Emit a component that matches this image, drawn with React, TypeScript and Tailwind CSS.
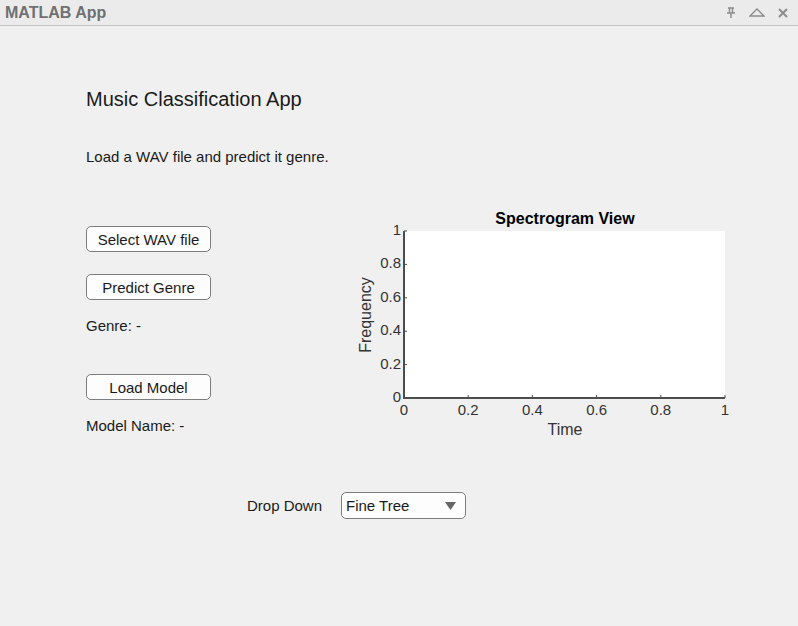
import React from 'react';

const yTicks = [0, 0.2, 0.4, 0.6, 0.8, 1];
const xTicks = [0, 0.2, 0.4, 0.6, 0.8, 1];

// plot box inside the svg
const X0 = 49;
const X1 = 370;
const Y0 = 26;
const Y1 = 193;

const fmt = (v: number) => (v === 0 || v === 1 ? String(v) : v.toFixed(1));

const SpectrogramAxes: React.FC = () => {
  const px = (v: number) => X0 + v * (X1 - X0);
  const py = (v: number) => Y1 - v * (Y1 - Y0);

  return (
    <svg width={390} height={240} className="block" style={{ fontFamily: '"Liberation Sans", Arial, sans-serif' }}>
      <text x={210} y={19} textAnchor="middle" fontSize={16} fontWeight={700} fill="#000">
        Spectrogram View
      </text>
      <rect x={X0} y={Y0} width={X1 - X0} height={Y1 - Y0} fill="#ffffff" />

      {yTicks.map((v) => (
        <g key={'y' + v}>
          <line x1={X0} x2={X0 + 3} y1={py(v)} y2={py(v)} stroke="#4d4d4d" strokeWidth={1} />
          <text x={X0 - 3} y={py(v)} textAnchor="end" dominantBaseline="middle" fontSize={15} fill="#333">
            {fmt(v)}
          </text>
        </g>
      ))}
      {xTicks.map((v) => (
        <g key={'x' + v}>
          <line x1={px(v)} x2={px(v)} y1={Y1} y2={Y1 - 3} stroke="#4d4d4d" strokeWidth={1} />
          <text x={px(v)} y={206} textAnchor="middle" dominantBaseline="middle" fontSize={15} fill="#333">
            {fmt(v)}
          </text>
        </g>
      ))}

      <line x1={X0} x2={X0} y1={Y0} y2={Y1 + 1} stroke="#4d4d4d" strokeWidth={2} />
      <line x1={X0 - 1} x2={X1} y1={Y1} y2={Y1} stroke="#4d4d4d" strokeWidth={2} />

      <text x={210} y={226} textAnchor="middle" dominantBaseline="middle" fontSize={16} fill="#333">
        Time
      </text>
      <text
        x={12}
        y={110}
        textAnchor="middle"
        dominantBaseline="middle"
        fontSize={16}
        fill="#333"
        transform="rotate(-90 12 110)"
      >
        Frequency
      </text>
    </svg>
  );
};

const AppButton: React.FC<{ label: string; className?: string }> = ({ label, className = '' }) => (
  <button
    className={`w-[125px] h-[26px] rounded-[5px] border border-[#7d7d7d] bg-[#fdfdfd] text-[15px] leading-none text-[#1a1a1a] flex items-center justify-center ${className}`}
  >
    {label}
  </button>
);

export default function App() {
  return (
    <div
      className="w-[798px] h-[626px] bg-[#f0f0f0] flex flex-col overflow-hidden text-[#1a1a1a]"
      style={{ fontFamily: '"Liberation Sans", Arial, sans-serif' }}
    >
      {/* window title bar */}
      <div className="h-[26px] shrink-0 bg-[#ebebeb] border-b border-[#c2c2c2] flex items-center justify-between pl-[5px] pr-[10px]">
        <span className="text-[16px] font-bold text-[#707070] leading-none">MATLAB App</span>
        <div className="flex items-center gap-[13px] text-[#8c8c8c]">
          <svg width={10} height={11} viewBox="0 0 10 11" fill="none" stroke="currentColor" strokeWidth={1.4}>
            <path d="M2 1h6M3.5 1v5M6.5 1v5M1 6h8M5 6v5" />
          </svg>
          <svg width={16} height={9} viewBox="0 0 16 9" fill="none" stroke="currentColor" strokeWidth={1.3}>
            <path d="M1 8h14L8 1z" />
          </svg>
          <svg width={10} height={10} viewBox="0 0 10 10" fill="none" stroke="currentColor" strokeWidth={2}>
            <path d="M1 1l8 8M9 1l-8 8" />
          </svg>
        </div>
      </div>

      <div className="pl-[86px]">
        <h1 className="mt-[61px] text-[20px] leading-[24px] font-normal">Music Classification App</h1>
        <p className="mt-[37px] text-[15px] leading-[18px]">Load a WAV file and predict it genre.</p>

        <div className="mt-[39px] flex items-start">
          <div className="w-[269px] pt-[21px] flex flex-col items-start">
            <AppButton label="Select WAV file" />
            <AppButton label="Predict Genre" className="mt-[22px]" />
            <div className="mt-[17px] text-[15px] leading-[18px]">Genre: -</div>
            <AppButton label="Load Model" className="mt-[39px]" />
            <div className="mt-[17px] text-[15px] leading-[18px]">Model Name: -</div>
          </div>
          <SpectrogramAxes />
        </div>

        <div className="mt-[47px] ml-[161px] flex items-center">
          <span className="w-[94px] text-[15px] leading-[18px]">Drop Down</span>
          <div className="w-[125px] h-[27px] rounded-[5px] border border-[#7d7d7d] bg-[#fdfdfd] flex items-center justify-between pl-[4px] pr-[9px]">
            <span className="text-[15px] leading-none">Fine Tree</span>
            <svg width={11} height={8} viewBox="0 0 11 8">
              <path d="M0 0h11L5.5 8z" fill="#666" />
            </svg>
          </div>
        </div>
      </div>
    </div>
  );
}
